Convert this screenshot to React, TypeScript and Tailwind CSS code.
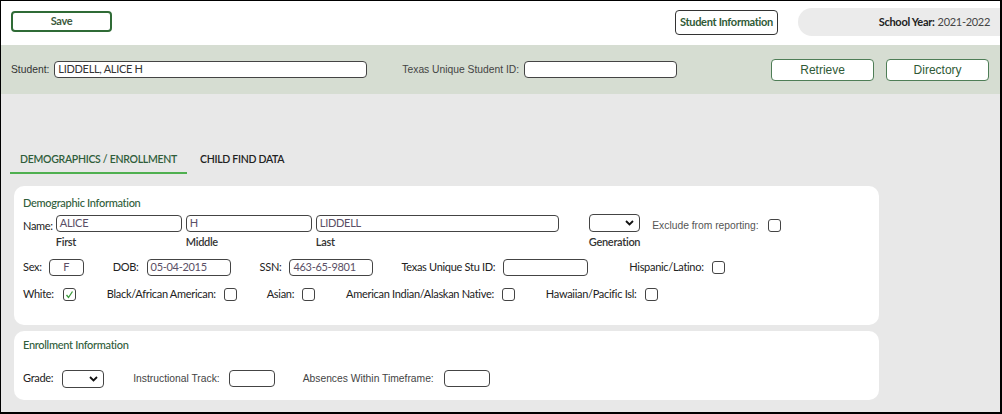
import React from "react";

const nun = { fontFamily: "Lato, 'Noto Sans', sans-serif", letterSpacing: "-0.3px" } as React.CSSProperties;
const ari = { fontFamily: "'Liberation Sans', Arial, sans-serif", fontSize: "10.3px", letterSpacing: "0px" } as React.CSSProperties;

function Input({ w, value, center }: { w: number; value?: string; center?: boolean }) {
  return (
    <div
      className={`h-[17px] border border-[#444] rounded-[4px] bg-white flex items-center px-[3px] text-[11px] text-[#5a4f66] ${center ? "justify-center" : ""}`}
      style={{ width: w }}
    >
      {value}
    </div>
  );
}

function Check({ checked }: { checked?: boolean }) {
  return (
    <div className="w-[13px] h-[13px] border border-[#444] rounded-[3px] bg-white flex items-center justify-center">
      {checked && (
        <svg width="9" height="9" viewBox="0 0 9 9">
          <path d="M1.5 5 L3.5 7.5 L7.5 1.5" fill="none" stroke="#3a9a3a" strokeWidth="1.3" />
        </svg>
      )}
    </div>
  );
}

function Select({ w }: { w: number }) {
  return (
    <div
      className="h-[18px] border border-[#444] rounded-[4px] bg-white flex items-center justify-end pr-[5px]"
      style={{ width: w }}
    >
      <svg width="9" height="6" viewBox="0 0 9 6">
        <path d="M1 1 L4.5 4.5 L8 1" fill="none" stroke="#111" strokeWidth="1.8" />
      </svg>
    </div>
  );
}

export default function App() {
  return (
    <div
      className="w-[1002px] h-[414px] box-border border-t border-l border-r-2 border-b-2 border-black bg-[#e8e8e8] flex flex-col overflow-hidden text-[11px] text-[#222]"
      style={nun}
    >
      {/* top bar */}
      <div className="h-[44px] bg-white flex items-start shrink-0">
        <button className="ml-[10px] mt-[10px] w-[101px] h-[21px] border-2 border-[#2f6b36] rounded-[4px] text-[11px] font-bold text-[#3d5a3e] bg-white">
          Save
        </button>
        <div className="flex-1" />
        <button className="mt-[9px] w-[103px] h-[25px] border border-[#333] rounded-[4px] text-[11px] font-bold text-[#2f5a36] bg-white">
          Student Information
        </button>
        <div className="ml-[20px] mt-[7px] w-[202px] h-[28px] bg-[#ebebeb] rounded-l-[14px] flex items-center justify-end pr-[10px] text-[11px] text-[#222]">
          <span className="font-bold">School Year:</span>
          <span className="ml-[3px] text-[#444]">2021-2022</span>
        </div>
      </div>

      {/* student band */}
      <div className="h-[49px] bg-[#d6ddd2] flex items-center shrink-0 pl-[10px]" style={ari}>
        <span className="text-[#333] mr-[5px]">Student:</span>
        <div className="w-[313px] h-[17px] border border-[#444] rounded-[4px] bg-white flex items-center px-[3px] text-[11px] text-[#333]" style={nun}>
          LIDDELL, ALICE H
        </div>
        <span className="ml-[35px] text-[#444] mr-[5px]">Texas Unique Student ID:</span>
        <div className="w-[153px] h-[17px] border border-[#444] rounded-[4px] bg-white" />
        <button className="ml-[94px] w-[103px] h-[22px] border border-[#4e7d56] rounded-[4px] bg-white text-[12px] text-[#2f5a36]">
          Retrieve
        </button>
        <button className="ml-[12px] w-[103px] h-[22px] border border-[#4e7d56] rounded-[4px] bg-white text-[12px] text-[#2f5a36]">
          Directory
        </button>
      </div>

      {/* tabs */}
      <div className="mt-[53px] flex items-end pl-[9px] h-[27px] shrink-0">
        <div className="w-[177px] h-full flex items-center justify-center border-b-2 border-[#4fb050] text-[10.5px] font-semibold text-[#2f5d3a] pt-[1px]">
          DEMOGRAPHICS / ENROLLMENT
        </div>
        <div className="ml-[13px] h-full flex items-center text-[10.5px] font-semibold text-[#222] pb-[2px]">
          CHILD FIND DATA
        </div>
      </div>

      {/* demographic card */}
      <div className="mt-[12px] ml-[13px] w-[865px] h-[139px] bg-white rounded-[10px] pl-[9px] pt-[9px] shrink-0">
        <div className="text-[11px] text-[#2f5d3a] font-medium">Demographic Information</div>
        <div className="flex items-start mt-[3px]">
          <span className="mt-[3px] mr-[3px]">Name:</span>
          <div className="flex flex-col">
            <Input w={126} value="ALICE" />
            <span className="mt-[2px] font-semibold text-[#333]">First</span>
          </div>
          <div className="flex flex-col ml-[4px]">
            <Input w={126} value="H" />
            <span className="mt-[2px] font-semibold text-[#333]">Middle</span>
          </div>
          <div className="flex flex-col ml-[4px]">
            <Input w={243} value="LIDDELL" />
            <span className="mt-[2px] font-semibold text-[#333]">Last</span>
          </div>
          <div className="flex flex-col ml-[30px] -mt-[1px]">
            <Select w={51} />
            <span className="mt-[2px] font-semibold text-[#333]">Generation</span>
          </div>
          <span className="ml-[12px] mt-[3px] text-[#555]" style={ari}>Exclude from reporting:</span>
          <div className="ml-[9px] mt-[4px]"><Check /></div>
        </div>

        <div className="flex items-center mt-[9px]">
          <span className="mr-[7px]">Sex:</span>
          <Input w={35} value="F" center />
          <span className="ml-[29px] mr-[8px]">DOB:</span>
          <Input w={84} value="05-04-2015" />
          <span className="ml-[29px] mr-[8px]">SSN:</span>
          <Input w={84} value="463-65-9801" />
          <span className="ml-[28px] mr-[8px]">Texas Unique Stu ID:</span>
          <Input w={85} />
          <span className="ml-[41px] mr-[8px]">Hispanic/Latino:</span>
          <Check />
        </div>

        <div className="flex items-center mt-[10px]">
          <span className="mr-[9px]">White:</span>
          <Check checked />
          <span className="ml-[31px] mr-[8px]">Black/African American:</span>
          <Check />
          <span className="ml-[30px] mr-[8px]">Asian:</span>
          <Check />
          <span className="ml-[31px] mr-[8px]">American Indian/Alaskan Native:</span>
          <Check />
          <span className="ml-[31px] mr-[8px]">Hawaiian/Pacific Isl:</span>
          <Check />
        </div>
      </div>

      {/* enrollment card */}
      <div className="mt-[6px] ml-[13px] w-[865px] h-[69px] bg-white rounded-[10px] pl-[9px] pt-[6px] shrink-0">
        <div className="text-[11px] text-[#2f5d3a] font-medium">Enrollment Information</div>
        <div className="flex items-center mt-[16px]">
          <span className="mr-[9px]">Grade:</span>
          <Select w={42} />
          <span className="ml-[29px] mr-[9px] text-[#444]" style={ari}>Instructional Track:</span>
          <Input w={46} />
          <span className="ml-[28px] mr-[10px] text-[#444]" style={ari}>Absences Within Timeframe:</span>
          <Input w={46} />
        </div>
      </div>
    </div>
  );
}
